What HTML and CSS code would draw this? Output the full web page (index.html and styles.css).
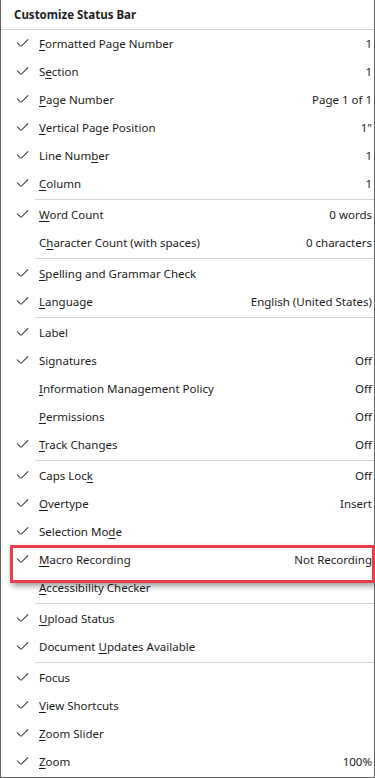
FILE: index.html
```html
<!DOCTYPE html>
<html lang="en">
<head>
  <meta charset="UTF-8" />
  <meta name="viewport" content="width=device-width, initial-scale=1.0" />
  <title>Customize Status Bar</title>
  <link rel="stylesheet" href="styles.css">
</head>
<body>
  <div class="status-menu">
    <div class="menu-title">Customize Status Bar</div>

    <div class="menu-row checked"><span class="check"></span><span class="label"><u>F</u>ormatted Page Number</span><span class="value">1</span></div>
    <div class="menu-row checked"><span class="check"></span><span class="label">S<u>e</u>ction</span><span class="value">1</span></div>
    <div class="menu-row checked"><span class="check"></span><span class="label"><u>P</u>age Number</span><span class="value">Page 1 of 1</span></div>
    <div class="menu-row checked"><span class="check"></span><span class="label"><u>V</u>ertical Page Position</span><span class="value">1"</span></div>
    <div class="menu-row checked"><span class="check"></span><span class="label">Line Num<u>b</u>er</span><span class="value">1</span></div>
    <div class="menu-row checked"><span class="check"></span><span class="label"><u>C</u>olumn</span><span class="value">1</span></div>
    <div class="menu-sep"></div>

    <div class="menu-row checked"><span class="check"></span><span class="label"><u>W</u>ord Count</span><span class="value">0 words</span></div>
    <div class="menu-row"><span class="check"></span><span class="label">C<u>h</u>aracter Count (with spaces)</span><span class="value">0 characters</span></div>
    <div class="menu-sep"></div>

    <div class="menu-row checked"><span class="check"></span><span class="label"><u>S</u>pelling and Grammar Check</span><span class="value"></span></div>
    <div class="menu-row checked"><span class="check"></span><span class="label"><u>L</u>anguage</span><span class="value">English (United States)</span></div>
    <div class="menu-sep"></div>

    <div class="menu-row checked"><span class="check"></span><span class="label">Label</span><span class="value"></span></div>
    <div class="menu-row checked"><span class="check"></span><span class="label">Si<u>g</u>natures</span><span class="value">Off</span></div>
    <div class="menu-row"><span class="check"></span><span class="label"><u>I</u>nformation Management Policy</span><span class="value">Off</span></div>
    <div class="menu-row"><span class="check"></span><span class="label"><u>P</u>ermissions</span><span class="value">Off</span></div>
    <div class="menu-row checked"><span class="check"></span><span class="label"><u>T</u>rack Changes</span><span class="value">Off</span></div>
    <div class="menu-sep"></div>

    <div class="menu-row checked"><span class="check"></span><span class="label">Caps Loc<u>k</u></span><span class="value">Off</span></div>
    <div class="menu-row checked"><span class="check"></span><span class="label"><u>O</u>vertype</span><span class="value">Insert</span></div>
    <div class="menu-row checked"><span class="check"></span><span class="label">Selection Mo<u>d</u>e</span><span class="value"></span></div>
    <div class="menu-row checked"><span class="check"></span><span class="label"><u>M</u>acro Recording</span><span class="value">Not Recording</span></div>
    <div class="menu-row"><span class="check"></span><span class="label"><u>A</u>ccessibility Checker</span><span class="value"></span></div>
    <div class="menu-sep"></div>

    <div class="menu-row checked"><span class="check"></span><span class="label"><u>U</u>pload Status</span><span class="value"></span></div>
    <div class="menu-row checked"><span class="check"></span><span class="label">Document <u>U</u>pdates Available</span><span class="value"></span></div>
    <div class="menu-sep"></div>

    <div class="menu-row checked"><span class="check"></span><span class="label">Focus</span><span class="value"></span></div>
    <div class="menu-row checked"><span class="check"></span><span class="label"><u>V</u>iew Shortcuts</span><span class="value"></span></div>
    <div class="menu-row checked"><span class="check"></span><span class="label"><u>Z</u>oom Slider</span><span class="value"></span></div>
    <div class="menu-row checked"><span class="check"></span><span class="label"><u>Z</u>oom</span><span class="value">100%</span></div>

    <!-- callout box around the Macro Recording row -->
    <div class="highlight-box"></div>
  </div>
</body>
</html>
```

FILE: styles.css
```css
html, body {
  box-sizing: border-box;
}
*, *::before, *::after {
  box-sizing: inherit;
}
body {
  margin: 0;
  background: #fff;
  font-family: 'Noto Sans', 'Open Sans', Arial, sans-serif;
  font-size: 11.5px;
  color: #1b1b1b;
}
.status-menu {
  position: relative;
  width: 375px;
  height: 778px;
  background: #fff;
  border-left: 1px solid #626262;
  border-right: 1px solid #626262;
  border-bottom: 1px solid #626262;
}
.menu-title {
  height: 30px;
  padding-left: 13px;
  display: flex;
  align-items: center;
  font-weight: 700;
  color: #1e1e1e;
  border-bottom: 1px solid #d4d4d4;
}
.menu-row {
  height: 28px;
  display: grid;
  grid-template-columns: 38px 1fr auto;
  align-items: center;
  padding-right: 2px;
  padding-bottom: 2px;
  white-space: nowrap;
}
.menu-row u {
  text-underline-offset: 2px;
}
.check {
  display: block;
  width: 11px;
  height: 8px;
  margin-left: 16px;
}
/* thin tick drawn with css borders */
.menu-row.checked .check {
  position: relative;
}
.menu-row.checked .check::before,
.menu-row.checked .check::after {
  content: "";
  position: absolute;
  height: 1px;
  background: #2b2b2b;
  transform-origin: left center;
}
.menu-row.checked .check::before {
  left: 0;
  top: 3px;
  width: 5.4px;
  transform: rotate(45deg);
}
.menu-row.checked .check::after {
  left: 3.6px;
  top: 7px;
  width: 10px;
  transform: rotate(-45deg);
}
.value {
  text-align: right;
}
.menu-sep {
  height: 1px;
  margin: 1px 0 1px 34px;
  background: #d4d4d4;
}
.highlight-box {
  position: absolute;
  left: 9px;
  top: 545px;
  width: 365px;
  height: 38px;
  border: 3px solid #ea3f48;
  box-shadow: 2px 3px 6px rgba(0, 0, 0, 0.4);
  pointer-events: none;
}
```
